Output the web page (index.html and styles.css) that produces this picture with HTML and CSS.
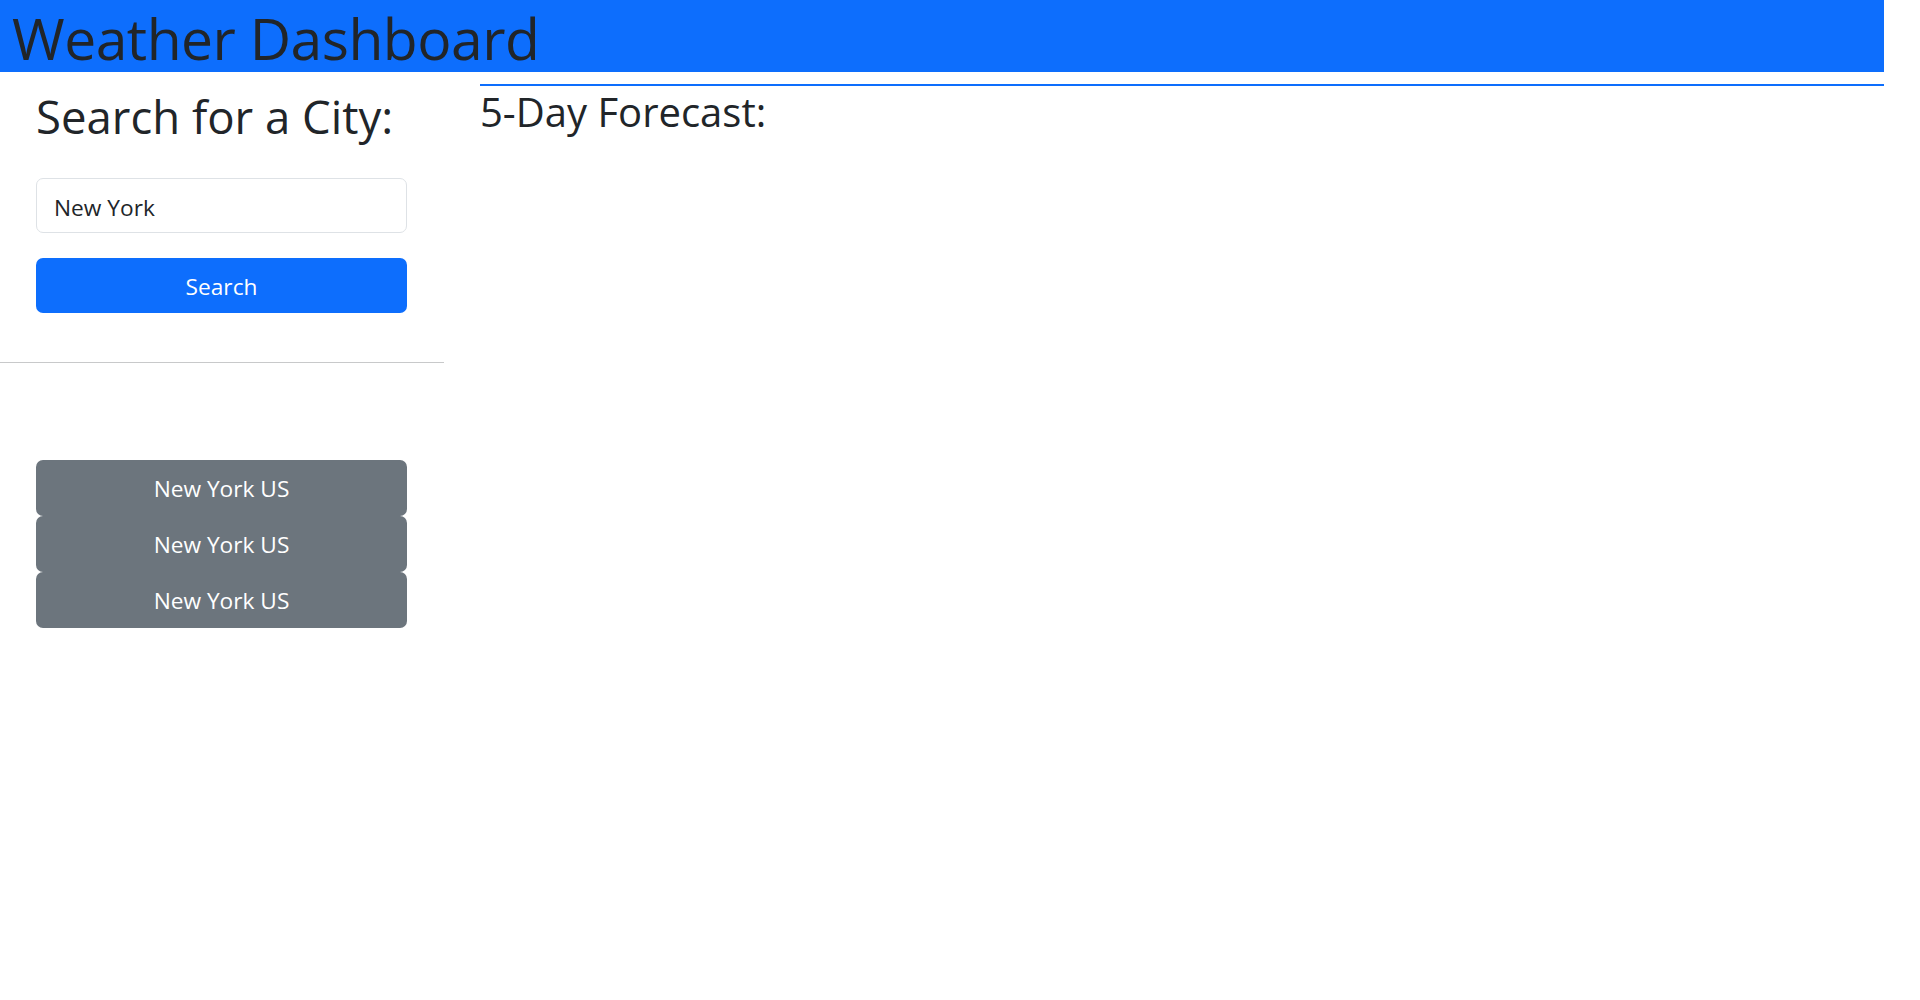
FILE: index.html
```html
<!DOCTYPE html>
<html lang="en">
<head>
<meta charset="utf-8">
<title>Weather Dashboard</title>
<link rel="stylesheet" href="styles.css">
</head>
<body>
<header class="topbar">
  <h1 class="brand">Weather Dashboard</h1>
</header>
<main class="layout">
  <aside class="sidebar">
    <div class="search-area">
      <h2 class="side-title">Search for a City:</h2>
      <input class="city-input" type="text" value="New York">
      <button class="btn btn-primary" type="button">Search</button>
    </div>
    <hr class="divider">
    <div class="history">
      <button class="btn btn-secondary" type="button">New York US</button>
      <button class="btn btn-secondary" type="button">New York US</button>
      <button class="btn btn-secondary" type="button">New York US</button>
    </div>
  </aside>
  <section class="forecast">
    <h3 class="forecast-title">5-Day Forecast:</h3>
  </section>
</main>
</body>
</html>
```

FILE: styles.css
```css
* { box-sizing: border-box; }
body {
  margin: 0;
  font-family: "Open Sans", "Noto Sans", sans-serif;
  color: #212529;
  background: #fff;
}
.topbar {
  width: 1884px;
  height: 72px;
  background: #0d6efd;
  padding: 4px 0 0 12px;
}
.brand {
  margin: 0;
  font-size: 57px;
  font-weight: 400;
  letter-spacing: -0.5px;
  line-height: 68px;
  white-space: nowrap;
}
.layout {
  display: flex;
  width: 1884px;
  gap: 36px;
}
.sidebar {
  width: 444px;
  flex: none;
}
.search-area {
  padding: 0 37px 0 36px;
}
.side-title {
  margin: 16px 0 0;
  font-size: 45.5px;
  font-weight: 400;
  line-height: 56px;
  white-space: nowrap;
}
.city-input {
  display: block;
  width: 100%;
  height: 55px;
  margin-top: 34px;
  padding: 3px 17px 0;
  border: 1px solid #dee2e6;
  border-radius: 7px;
  font-family: inherit;
  font-size: 22.7px;
  color: #212529;
  background: #fff;
}
.btn {
  display: block;
  width: 100%;
  border: 0;
  border-radius: 7px;
  font-family: inherit;
  font-size: 22.7px;
  color: #fff;
  cursor: pointer;
}
.btn-primary {
  height: 55px;
  margin-top: 25px;
  padding-top: 3px;
  background: #0d6efd;
}
.divider {
  height: 0;
  border: 0;
  border-top: 1.5px solid #c8c9ca;
  margin: 49px 0 0;
}
.history {
  margin-top: 97px;
  padding: 0 37px 0 36px;
}
.btn-secondary {
  height: 56px;
  padding-top: 2px;
  background: #6c757d;
}
.forecast {
  flex: 1;
  margin-top: 12px;
  border-top: 2px solid #0d6efd;
}
.forecast-title {
  margin: 2px 0 0;
  font-size: 40px;
  font-weight: 400;
  line-height: 1.2;
}
```
